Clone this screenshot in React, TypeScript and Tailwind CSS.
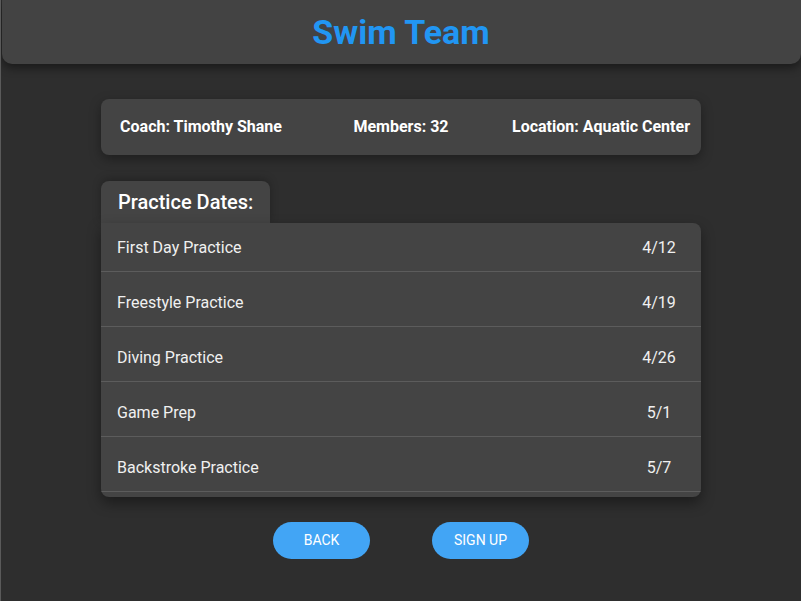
const practices = [
  { name: 'First Day Practice', date: '4/12' },
  { name: 'Freestyle Practice', date: '4/19' },
  { name: 'Diving Practice', date: '4/26' },
  { name: 'Game Prep', date: '5/1' },
  { name: 'Backstroke Practice', date: '5/7' },
];

const App = () => {
  return (
    <div
      className="w-[801px] h-[601px] bg-[#2e2e2e] border-l border-[#5a5a5a] flex flex-col items-center overflow-hidden"
      style={{ fontFamily: 'Roboto, "Liberation Sans", sans-serif' }}
    >
      {/* Header */}
      <header className="w-[799px] h-[64px] shrink-0 bg-[#434343] rounded-b-[10px] shadow-[0_4px_10px_rgba(0,0,0,0.45)] flex items-center justify-center">
        <h1 className="text-[34px] font-bold text-[#2196f3] leading-none">Swim Team</h1>
      </header>

      {/* Team info */}
      <div className="mt-[35px] w-[600px] h-[56px] shrink-0 bg-[#444444] rounded-[8px] shadow-[0_4px_12px_rgba(0,0,0,0.35)] flex items-center text-[16px] font-bold text-white">
        <div className="flex-1 text-center">Coach: Timothy Shane</div>
        <div className="flex-1 text-center">Members: 32</div>
        <div className="flex-1 text-center">Location: Aquatic Center</div>
      </div>

      {/* Practice dates */}
      <div className="mt-[26px] w-[600px] shrink-0 flex flex-col">
        <div className="w-[169px] h-[42px] bg-[#444444] rounded-t-[8px] pl-[17px] flex items-center text-[20px] font-medium text-white shadow-[0_-2px_8px_rgba(0,0,0,0.25)]">
          Practice Dates:
        </div>
        <div className="h-[274px] bg-[#444444] rounded-b-[8px] rounded-tr-[8px] overflow-hidden shadow-[0_6px_14px_rgba(0,0,0,0.4)]">
          <div className="-mt-[6px]">
            {practices.map((p) => (
              <div
                key={p.name}
                className="h-[55px] flex items-center justify-between border-b border-[#5c5c5c] pl-[16px] pr-[12px] pt-[7px] text-[16px] text-[#f0f0f0]"
              >
                <span>{p.name}</span>
                <span className="w-[60px] text-center">{p.date}</span>
              </div>
            ))}
          </div>
        </div>
      </div>

      {/* Actions */}
      <div className="mt-[25px] flex gap-[62px]">
        <button className="w-[97px] h-[37px] rounded-full bg-[#42a5f5] text-white text-[14px] uppercase">
          Back
        </button>
        <button className="w-[97px] h-[37px] rounded-full bg-[#42a5f5] text-white text-[14px] uppercase">
          Sign Up
        </button>
      </div>
    </div>
  );
};

export default App;
